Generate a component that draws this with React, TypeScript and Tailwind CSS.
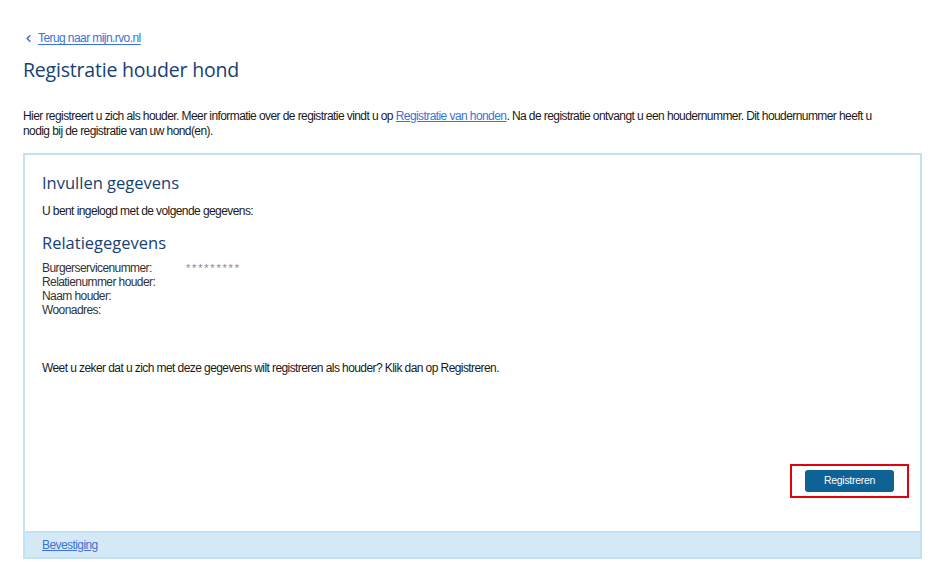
import { ChevronLeft } from "lucide-react";

const body = "font-['Liberation_Sans',Arial,sans-serif] text-[12px] tracking-[-0.58px] text-[#1a1a1a]";
const head = "font-['Open_Sans','Noto_Sans',sans-serif] text-[#154273]";

function DetailRow({ label, value }: { label: string; value?: string }) {
  return (
    <div className="flex h-[14px] items-center">
      <span className="w-[144px] text-[#333]">{label}</span>
      {value && <span className="text-[11px] tracking-[1.8px] text-[#8a8a8a]">{value}</span>}
    </div>
  );
}

export default function App() {
  return (
    <div className={`min-h-[580px] w-[945px] bg-white ${body}`}>
      <div className="px-[23px] pt-[29px]">
        <a href="#" className="flex items-center gap-[4px] text-[#3a74d6] underline underline-offset-2">
          <ChevronLeft className="h-[11px] w-[11px] stroke-[3.5]" />
          <span>Terug naar mijn.rvo.nl</span>
        </a>

        <h1 className={`${head} mt-[9px] text-[19.5px] leading-[28px] tracking-[-0.2px]`}>
          Registratie houder hond
        </h1>

        <p className="mt-[25px] leading-[15px]">
          Hier registreert u zich als houder. Meer informatie over de registratie vindt u op{" "}
          <a href="#" className="text-[#3a74d6] underline">
            Registratie van honden
          </a>
          . Na de registratie ontvangt u een houdernummer. Dit houdernummer heeft u
          <br />
          nodig bij de registratie van uw hond(en).
        </p>

        <section className="mt-[14px] flex h-[406px] w-[899px] flex-col border-2 border-[#c2e1f4]">
          <div className="flex flex-1 flex-col px-[17px] pt-[16px]">
            <h2 className={`${head} text-[16.5px] leading-[24px] tracking-normal`}>Invullen gegevens</h2>
            <p className="mt-[9px] leading-[14px]">U bent ingelogd met de volgende gegevens:</p>

            <h2 className={`${head} mt-[13px] text-[16.5px] leading-[24px] tracking-normal`}>Relatiegegevens</h2>
            <div className="mt-[6px]">
              <DetailRow label="Burgerservicenummer:" value="*********" />
              <DetailRow label="Relatienummer houder:" />
              <DetailRow label="Naam houder:" />
              <DetailRow label="Woonadres:" />
            </div>

            <p className="mt-[44px] leading-[14px]">
              Weet u zeker dat u zich met deze gegevens wilt registreren als houder? Klik dan op Registreren.
            </p>

            <div className="mt-auto mb-[33px] -mr-[6px] flex justify-end">
              <div className="border-2 border-[#e3000f] px-[13px] py-[4px]">
                <button className="h-[22px] w-[89px] rounded-[3px] bg-[#0e6296] text-[10.5px] tracking-[-0.3px] text-white">
                  Registreren
                </button>
              </div>
            </div>
          </div>
          <div className="flex h-[26px] items-center border-t-2 border-[#c2e1f4] bg-[#d5e8f6] px-[17px]">
            <a href="#" className="text-[#3a74d6] underline">
              Bevestiging
            </a>
          </div>
        </section>
      </div>
    </div>
  );
}
